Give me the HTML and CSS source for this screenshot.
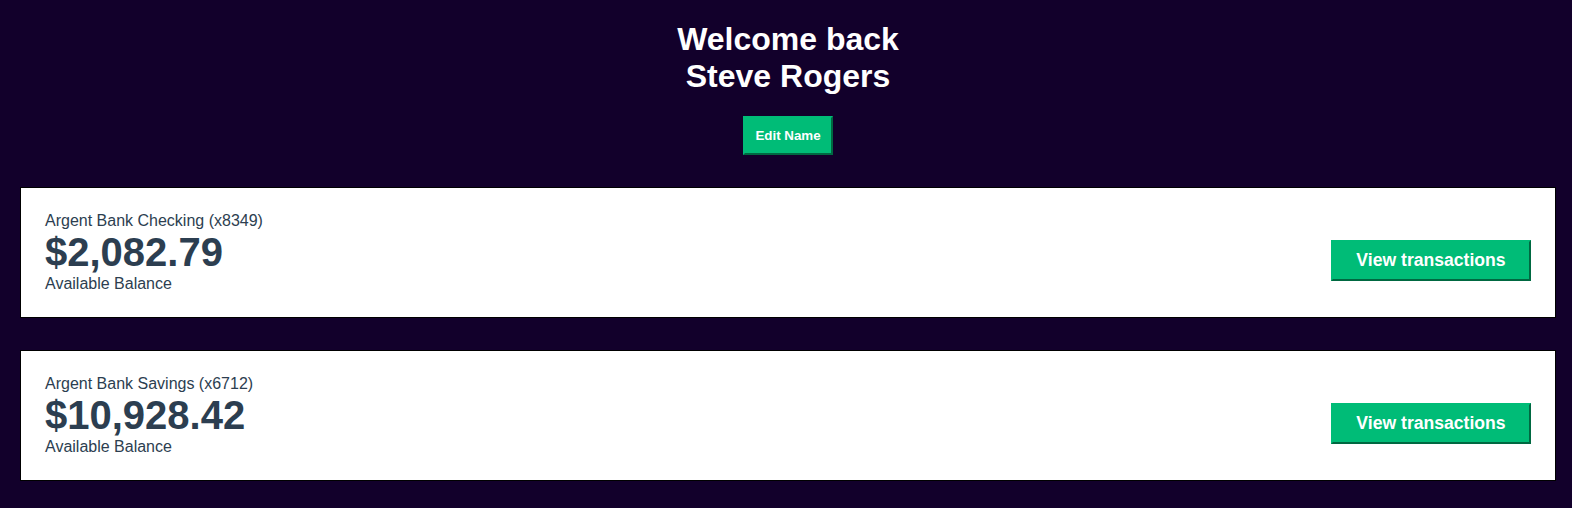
FILE: index.html
```html
<!DOCTYPE html>
<html lang="en">
<head>
<meta charset="utf-8">
<title>Argent Bank - User Page</title>
<link rel="stylesheet" href="styles.css">
</head>
<body>
<main class="main bg-dark">
  <div class="header">
    <h1>Welcome back<br>Steve Rogers</h1>
    <button class="edit-button">Edit Name</button>
  </div>
  <section class="account">
    <div class="account-content-wrapper">
      <h3 class="account-title">Argent Bank Checking (x8349)</h3>
      <p class="account-amount">$2,082.79</p>
      <p class="account-amount-description">Available Balance</p>
    </div>
    <div class="account-content-wrapper cta">
      <button class="transaction-button">View transactions</button>
    </div>
  </section>
  <section class="account">
    <div class="account-content-wrapper">
      <h3 class="account-title">Argent Bank Savings (x6712)</h3>
      <p class="account-amount">$10,928.42</p>
      <p class="account-amount-description">Available Balance</p>
    </div>
    <div class="account-content-wrapper cta">
      <button class="transaction-button">View transactions</button>
    </div>
  </section>
</main>
</body>
</html>
```
FILE: styles.css
```css
html, body {
  margin: 0;
  padding: 0;
  background-color: #12002b;
}
body {
  font-family: "Liberation Sans", Arial, Helvetica, sans-serif;
  color: #2c3e50;
  text-align: center;
}
.main {
  display: block;
  overflow: hidden;
  padding: 0 16px 0 20px;
}
.bg-dark {
  background-color: #12002b;
}
.header {
  color: #fff;
  margin-bottom: 32px;
}
.header h1 {
  font-size: 32px;
  font-weight: bold;
  margin: 20.5px 0 21.44px;
}
.edit-button {
  font-family: "Liberation Sans", Arial, sans-serif;
  font-size: 13.333px;
  border: 2px outset #00bc77;
  background-color: #00bc77;
  color: #fff;
  font-weight: bold;
  padding: 10px;
  margin: 0;
}
.account {
  display: flex;
  flex-direction: row;
  justify-content: space-between;
  align-items: center;
  border: 1px solid black;
  background-color: #fff;
  margin: 0 0 32px;
  padding: 24px;
  box-sizing: border-box;
  text-align: left;
}
.account-content-wrapper {
  width: 100%;
  flex: 1;
}
.account-content-wrapper.cta {
  flex: 0;
}
.account-title {
  margin: 0;
  padding: 0;
  font-size: 16px;
  font-weight: normal;
}
.account-amount {
  margin: 0;
  font-size: 40px;
  font-weight: bold;
}
.account-amount-description {
  margin: 0;
  font-size: 16px;
}
.transaction-button {
  display: block;
  width: 200px;
  padding: 8px;
  font-family: "Liberation Sans", Arial, sans-serif;
  font-size: 17.6px;
  font-weight: bold;
  margin-top: 16px;
  border: 2px outset #00bc77;
  background-color: #00bc77;
  color: #fff;
}
```
